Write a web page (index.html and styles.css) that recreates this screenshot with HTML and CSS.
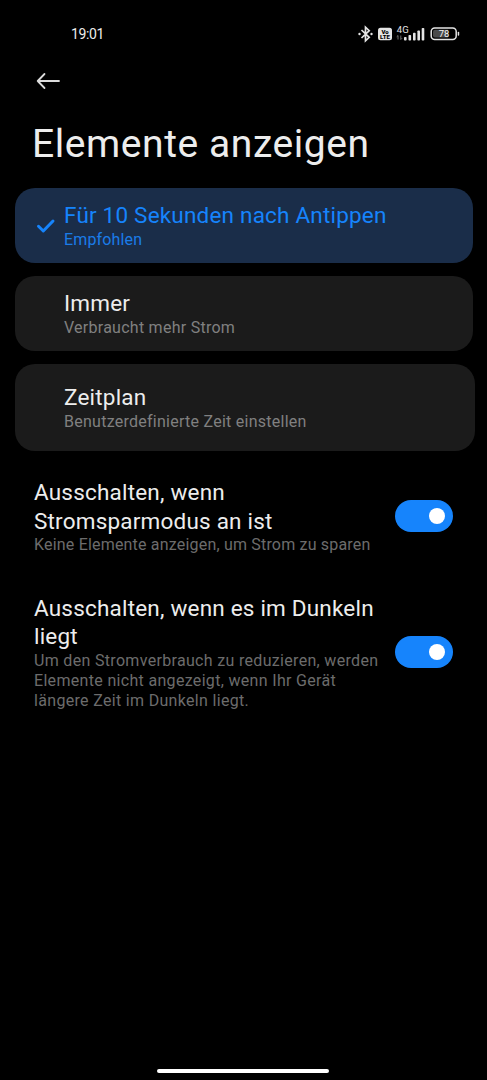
FILE: index.html
```html
<!DOCTYPE html>
<html lang="de">
<head>
    <meta charset="UTF-8">
    <meta name="viewport" content="width=device-width, initial-scale=1.0">
    <title>Elemente anzeigen</title>
    <link rel="stylesheet" href="styles.css">
</head>
<body>
    <div class="status-bar">
        <span class="clock">19:01</span>
        <svg class="status-icons" width="104" height="20" viewBox="0 0 104 20">
            <g fill="none" stroke="#e4e4e4" stroke-width="1.7">
                <path d="M3.500 6l7.700 7.300-3.700 3.500V3.200l3.700 3.500L3.500 14"/>
            </g>
            <circle cx="1.500" cy="10" r="1.200" fill="#e4e4e4"/>
            <circle cx="13.500" cy="10" r="1.200" fill="#e4e4e4"/>
            <rect x="20" y="3.800" width="14" height="12.500" rx="2.500" fill="#e4e4e4"/>
            <text x="27" y="9.600" class="volte" text-anchor="middle">Vo</text>
            <text x="27" y="15.200" class="volte" text-anchor="middle">LTE</text>
            <text x="38.800" y="8.500" class="network">4G</text>
            <g fill="none" stroke="#8c8c8c" stroke-width=".8">
                <path d="M40 15.500v-4l-1.300 1.300M42.800 11.500v4l1.300-1.300"/>
            </g>
            <g fill="#e4e4e4">
                <rect x="46" y="13" width="2.600" height="3.500" rx=".8"/>
                <rect x="50.500" y="11" width="2.600" height="5.500" rx=".8"/>
                <rect x="55" y="8.800" width="2.600" height="7.700" rx=".8"/>
                <rect x="59.400" y="6.400" width="2.600" height="10.100" rx=".8"/>
                <rect x="63.700" y="4" width="2.600" height="12.500" rx=".8"/>
            </g>
            <rect x="73.200" y="4" width="25" height="11.400" rx="3.500" fill="none" stroke="#e4e4e4" stroke-width="1.500"/>
            <path d="M77 5.800h13v7.800H77a2 2 0 0 1-2-2V7.800a2 2 0 0 1 2-2z" fill="#4a4a4a"/>
            <rect x="99.700" y="7.800" width="1.500" height="4" rx=".7" fill="#e4e4e4"/>
            <text x="86" y="13.200" class="battery" text-anchor="middle">78</text>
        </svg>
    </div>

    <div class="toolbar">
        <svg class="back" width="24" height="18" viewBox="0 0 24 18" fill="none" stroke="#dcdcdc" stroke-width="1.800" stroke-linecap="round" stroke-linejoin="round">
            <path d="M23 9H1.700M8.500 2L1.700 9l6.800 7"/>
        </svg>
    </div>

    <h1 class="page-title">Elemente anzeigen</h1>

    <div class="options">
        <div class="option selected">
            <svg class="check" width="20" height="16" viewBox="0 0 20 16" fill="none" stroke="#1684fc" stroke-width="3" stroke-linecap="round" stroke-linejoin="round">
                <path d="M2.500 8.300l4.800 4.700L17 3"/>
            </svg>
            <div class="option-text">
                <div class="title">Für 10 Sekunden nach Antippen</div>
                <div class="summary">Empfohlen</div>
            </div>
        </div>
        <div class="option">
            <div class="option-text">
                <div class="title">Immer</div>
                <div class="summary">Verbraucht mehr Strom</div>
            </div>
        </div>
        <div class="option schedule">
            <div class="option-text">
                <div class="title">Zeitplan</div>
                <div class="summary">Benutzerdefinierte Zeit einstellen</div>
            </div>
        </div>
    </div>

    <div class="settings">
        <div class="setting">
            <div class="setting-text">
                <div class="title">Ausschalten, wenn<br>Stromsparmodus an ist</div>
                <div class="summary">Keine Elemente anzeigen, um Strom zu sparen</div>
            </div>
            <div class="toggle"><div class="knob"></div></div>
        </div>
        <div class="setting">
            <div class="setting-text">
                <div class="title">Ausschalten, wenn es im Dunkeln<br>liegt</div>
                <div class="summary wide">Um den Stromverbrauch zu reduzieren, werden<br>Elemente nicht angezeigt, wenn Ihr Gerät<br>längere Zeit im Dunkeln liegt.</div>
            </div>
            <div class="toggle"><div class="knob"></div></div>
        </div>
    </div>

    <div class="home-bar"></div>
</body>
</html>
```
FILE: styles.css
```css
* {
    box-sizing: border-box;
}

body {
    margin: 0;
    height: 1080px;
    display: flex;
    flex-direction: column;
    background-color: #000;
    color: #ededed;
    font-family: Roboto, "Noto Sans", sans-serif;
    overflow: hidden;
}

.status-bar {
    display: flex;
    justify-content: space-between;
    align-items: center;
    height: 48px;
    padding: 20px 25px 0 71px;
}

.clock {
    font-size: 14px;
    letter-spacing: -0.4px;
}

.volte {
    font-size: 6px;
    font-weight: 900;
    fill: #000;
}

.network {
    font-size: 9.5px;
    fill: #e4e4e4;
}

.battery {
    font-size: 9.5px;
    fill: #f4f4f4;
}

.toolbar {
    height: 64px;
    padding: 24px 0 0 36px;
}

.back {
    display: block;
}

.page-title {
    margin: 7px 0 0 32px;
    height: 50px;
    line-height: 50px;
    font-size: 39px;
    font-weight: 400;
    letter-spacing: 0.57px;
    white-space: nowrap;
}

.options {
    display: flex;
    flex-direction: column;
    gap: 13px;
    margin-top: 19px;
    padding-left: 15px;
}

.option {
    display: flex;
    align-items: center;
    width: 458px;
    height: 75px;
    padding-left: 49px;
    border-radius: 20px;
    background-color: #1b1b1b;
}

.option.selected {
    padding-left: 21px;
    gap: 8px;
    background-color: #1a2d49;
    color: #1684fc;
}

.option.schedule {
    width: 460px;
    height: 87px;
}

.title {
    font-size: 22.5px;
    line-height: 28.5px;
    letter-spacing: 0.2px;
    white-space: nowrap;
}

.summary {
    font-size: 16px;
    line-height: 20.2px;
    letter-spacing: 0.26px;
    color: #808080;
    white-space: nowrap;
}

.selected .summary {
    color: #1a7ce8;
    letter-spacing: 0.15px;
}

.settings {
    display: flex;
    flex-direction: column;
    gap: 39.4px;
    margin-top: 27.4px;
    padding: 0 34px;
}

.setting {
    display: flex;
    align-items: center;
    justify-content: space-between;
}

.setting .title {
    line-height: 28.2px;
}

.setting .summary {
    color: #6c6c6c;
    letter-spacing: 0.19px;
    line-height: 20px;
}

.setting .summary.wide {
    letter-spacing: 0.32px;
}

.toggle {
    display: flex;
    align-items: center;
    justify-content: flex-end;
    flex-shrink: 0;
    width: 58px;
    height: 32px;
    margin-bottom: 1px;
    padding-right: 8px;
    border-radius: 16px;
    background-color: #1684fc;
}

.knob {
    width: 16px;
    height: 16px;
    border-radius: 50%;
    background-color: #fff;
}

.home-bar {
    width: 172px;
    height: 4px;
    margin: auto auto 7px 157px;
    border-radius: 2px;
    background-color: #fff;
}
```
